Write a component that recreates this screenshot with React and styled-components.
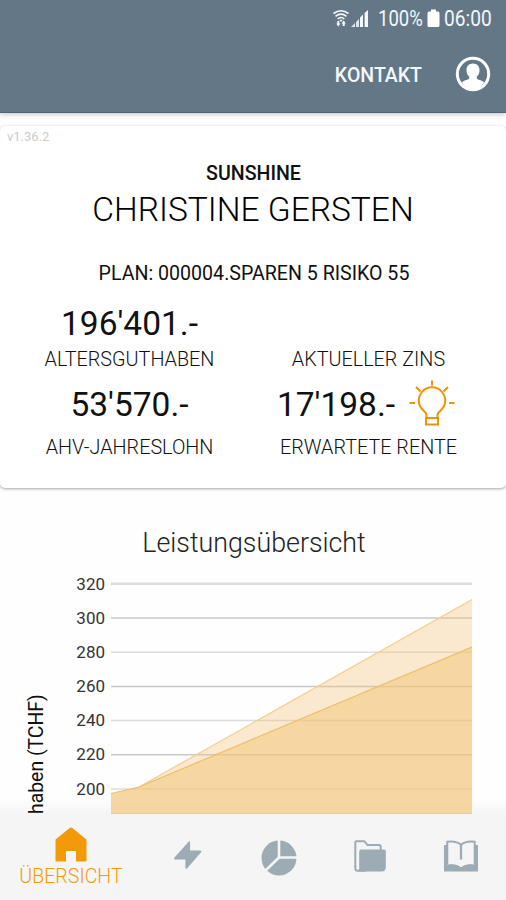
import React from "react";
import styled, { createGlobalStyle } from "styled-components";

const GlobalStyle = createGlobalStyle`
  * {
    box-sizing: border-box;
  }

  body {
    margin: 0;
    background: #fefefe;
    font-family: Roboto, "Liberation Sans", sans-serif;
    color: #111;
  }
`;

const Screen = styled.div`
  display: flex;
  flex-direction: column;
  width: 506px;
  height: 900px;
  overflow: hidden;
`;

const Header = styled.header`
  flex: none;
  height: 113px;
  background: #647786;
  border-bottom: 1px solid #50657a;
  box-shadow: 0 1px 5px rgba(60, 50, 50, 0.3);
  color: #f3f8fc;
`;

const StatusBar = styled.div`
  display: flex;
  align-items: center;
  height: 37px;
  padding-left: 332px;

  svg {
    flex: none;
  }
`;

const StatusText = styled.span`
  flex: none;
  width: ${props => props.$width}px;
  margin-left: ${props => props.$gap}px;
  font-size: 21.5px;
  line-height: 37px;
  white-space: nowrap;
  transform: scaleX(${props => props.$squeeze});
  transform-origin: left;
`;

const Toolbar = styled.div`
  display: flex;
  align-items: center;
  justify-content: flex-end;
  height: 74px;
  padding-right: 15px;
`;

const ContactLink = styled.span`
  margin: 2px 33px 0 0;
  font-size: 19.5px;
  font-weight: 500;
`;

const Card = styled.section`
  position: relative;
  flex: none;
  display: flex;
  flex-direction: column;
  align-items: center;
  height: 362px;
  margin-top: 13px;
  background: #fff;
  border-radius: 5px;
  box-shadow: 0 1px 3px rgba(0, 0, 0, 0.35);
`;

const Version = styled.div`
  align-self: flex-start;
  height: 35px;
  padding: 3px 0 0 7px;
  font-size: 13px;
  line-height: 16px;
  color: #ccc;
`;

const Company = styled.div`
  padding-left: 1px;
  font-size: 19.6px;
  font-weight: 500;
  line-height: 26px;
`;

const Name = styled.h1`
  margin: 3px 0 0;
  font-size: 33.5px;
  font-weight: 300;
  line-height: 40px;
  color: #000;
`;

const Plan = styled.div`
  margin-top: 32px;
  padding-left: 2px;
  font-size: 19.6px;
  line-height: 24px;
`;

const Figures = styled.div`
  display: grid;
  grid-template-columns: 239px 239px;
  grid-template-rows: 81px 88px;
  margin: 17px 8px 0 0;
`;

const Figure = styled.div`
  display: flex;
  flex-direction: column;
  align-items: center;
`;

const Amount = styled.div`
  display: flex;
  align-items: center;
  justify-content: center;
  height: 40px;
  padding-right: ${props => (props.$hint ? 6 : 0)}px;
  font-size: 33.5px;

  svg {
    flex: none;
    margin: -2px -1px 0 14px;
  }
`;

const Label = styled.div`
  margin-top: ${props => props.$gap}px;
  font-size: 19.8px;
  line-height: 24px;
  font-weight: 300;
`;

const Overview = styled.section`
  flex: none;
  height: 326px;
  padding-top: 39px;
  background: linear-gradient(#fefefe 95%, #f5f5f5);
`;

const Title = styled.h2`
  margin: 0;
  padding-left: 2px;
  text-align: center;
  font-size: 26.8px;
  font-weight: 300;
  line-height: 32px;
  color: #222;
`;

const Chart = styled.div`
  display: flex;
  height: 255px;
  padding-left: 25px;
`;

const AxisTitle = styled.div`
  width: 24px;
  font-size: 19.4px;
  line-height: 24px;
  white-space: nowrap;
  writing-mode: vertical-rl;
  transform: rotate(180deg);
`;

const Ticks = styled.div`
  width: 56px;
  margin-right: 6px;
  padding-top: 7.5px;
  text-align: right;
`;

const Tick = styled.div`
  height: 34.2px;
  font-size: 17px;
  line-height: 34.2px;
  color: #333;
`;

const Nav = styled.nav`
  flex: 1;
  display: grid;
  grid-template-columns: 142px 91px 91px 91px 91px;
  background: #f5f5f5;
`;

const Tab = styled.div`
  display: flex;
  flex-direction: column;
  align-items: center;
  padding-top: ${props => (props.$active ? 13 : 26)}px;
  font-size: 19.6px;
  font-weight: 300;
  line-height: 30px;
  color: ${props => (props.$active ? "#f39a0b" : "#9dabb4")};
`;

const ticks = [320, 300, 280, 260, 240, 220, 200];

const WifiIcon = () => (
  <svg width="18" height="20" viewBox="0 0 18 20" fill="none" stroke="#f3f8fc" strokeWidth="1.6">
    <path d="M1.5 4.5Q9 -1 16.5 4.5M3.5 7.3Q9 3 14.5 7.3M5.7 10Q9 7 12.3 10" />
    <path d="M7.3 10.7h3.4L9 13z" fill="#f3f8fc" stroke="none" />
    <path d="M4.2 14.5h4.2l-2.1 3zM9.6 14.5h4.2l-2.1-3z" fill="#f3f8fc" stroke="none" />
    <path d="M6.3 12v4M11.7 13v4" strokeWidth="2" />
  </svg>
);

const SignalIcon = () => (
  <svg width="19" height="20" viewBox="0 0 19 20" fill="#f3f8fc">
    <path d="M1 18l4-4v4zM6 13l3-3v8H6z" opacity=".85" />
    <path d="M10 8.5l3-3V18h-3zM14.6 4L18 1v17h-3.4z" />
  </svg>
);

const BatteryIcon = () => (
  <svg width="13" height="19" viewBox="0 0 13 19" fill="#fff">
    <path d="M4 .5h5v2h2q1.5 0 1.5 1.5v12.5q0 1.5-1.5 1.5H2q-1.5 0-1.5-1.5V4q0-1.5 1.5-1.5h2z" />
  </svg>
);

const UserIcon = () => (
  <svg width="36" height="36" viewBox="0 0 36 36">
    <circle cx="18" cy="18" r="15.7" fill="none" stroke="#fff" strokeWidth="3" />
    <path
      fill="#fff"
      d="M18 7.6c4.2 0 6.5 2.8 6.5 6.7 0 2.800-1 5-2.700 6.300v2c0 1 4.500 1.500 7.300 3.700C26.500 30.500 22.500 33 18 33S9.500 30.500 6.900 26.300c2.800-2.200 7.300-2.700 7.300-3.700v-2c-1.700-1.300-2.700-3.500-2.700-6.300 0-3.900 2.300-6.700 6.500-6.700z"
    />
  </svg>
);

const BulbIcon = () => (
  <svg width="46" height="46" viewBox="0 0 46 46" fill="none" stroke="#f39208" strokeWidth="2">
    <path d="M17.500 38v-3c0-1.500-1-2.700-2.500-4A13.200 13.200 0 1 1 31 31c-1.500 1.300-2.500 2.500-2.500 4v3" />
    <path d="M17 38h12v6.500H17z" />
    <path d="M23 .5v5M7 7l4.500 4.500M39 7l-4.500 4.500M.5 23H6M40 23h5.500" />
  </svg>
);

const HomeIcon = () => (
  <svg width="32" height="35" viewBox="0 0 32 35" fill="#f39a0b">
    <path d="M15 .8q1-.8 2 0l14.500 11.700V33.500q0 1-1 1H21v-9.500q0-1-1-1h-8q-1 0-1 1v9.500H1.500q-1 0-1-1v-21z" />
  </svg>
);

const BoltIcon = () => (
  <svg width="30" height="30" viewBox="0 0 30 30" fill="#9dabb4">
    <path d="M15.800 1.500q1.300-1 1.300.8V10.500h10.200q2 .2.600 2L14 28.500q-1.600 1-1.600-.8V19.500H2q-1.800-.2-.5-1.900z" />
  </svg>
);

const PieIcon = () => (
  <svg width="36" height="36" viewBox="0 0 36 36">
    <circle cx="18" cy="18" r="17.5" fill="#9dabb4" />
    <path d="M18 0v17.5h18M18 17.5L4.5 30.5" fill="none" stroke="#f5f5f5" strokeWidth="2.6" />
  </svg>
);

const FolderIcon = () => (
  <svg width="32" height="32" viewBox="0 0 32 32">
    <path d="M1.3 27V2.3q0-1 1-1h7.5q.8 0 1.3.7L13.5 5H25q1.7 0 1.7 1.7V11" fill="none" stroke="#9dabb4" strokeWidth="2" />
    <path d="M1.3 26v2.2q0 2.500 2.500 2.500H12" fill="none" stroke="#9dabb4" strokeWidth="2" />
    <path d="M7 9.500h23q1.800 0 1.800 2V27q0 4.500-4.500 4.500H4q1.200-1 1.200-3V11.500q0-2 1.800-2z" fill="#9dabb4" />
  </svg>
);

const BookIcon = () => (
  <svg width="36" height="32" viewBox="0 0 36 32">
    <path d="M1 5h4v19h26V5h4v26.500H1z" fill="#9dabb4" />
    <path d="M4.800 25V2Q13 .5 18 4.800 23 .5 31.200 2v23Q23 23.500 18 27.500 13 23.500 4.800 25z" fill="#f5f5f5" />
    <path d="M5 24.5Q13 23.500 18 27.500 23 23.500 31 24.500V30H5z" fill="#9dabb4" />
    <path d="M4.300 24V1.800Q13 .5 18 4.800 23 .5 31.700 1.800V24" fill="none" stroke="#9dabb4" strokeWidth="2" />
    <path d="M18 5v14.500" stroke="#9dabb4" strokeWidth="2.300" />
  </svg>
);

const AreaChart = () => (
  <svg width="361" height="255" viewBox="0 0 361 255">
    {ticks.map((tick, i) => (
      <path key={tick} d={`M0 ${24.8 + i * 34.2}H361`} stroke={i % 2 ? "#c8c8c8" : "#dcdcdc"} strokeWidth={i ? 1.5 : 2.5} />
    ))}
    <path d="M0 234.5L28 228 361 40.5V255H0z" fill="rgba(244, 193, 120, 0.35)" />
    <path d="M0 234.5L28 228 361 88V255H0z" fill="rgba(243, 201, 123, 0.55)" />
    <path d="M28 228L361 40.5" fill="none" stroke="#f4cf91" strokeWidth="1.2" />
    <path d="M0 234.5L28 228 361 88" fill="none" stroke="#efbd6b" strokeWidth="1.2" />
    <path d="M0 254.5H361" stroke="#e3cda7" />
  </svg>
);

const App = () => (
  <Screen>
    <GlobalStyle />
    <Header>
      <StatusBar>
        <WifiIcon />
        <SignalIcon />
        <StatusText $width={49} $gap={9} $squeeze={0.86}>100%</StatusText>
        <BatteryIcon />
        <StatusText $width={48} $gap={4} $squeeze={0.89}>06:00</StatusText>
      </StatusBar>
      <Toolbar>
        <ContactLink>KONTAKT</ContactLink>
        <UserIcon />
      </Toolbar>
    </Header>

    <Card>
      <Version>v1.36.2</Version>
      <Company>SUNSHINE</Company>
      <Name>CHRISTINE GERSTEN</Name>
      <Plan>PLAN: 000004.SPAREN 5 RISIKO 55</Plan>
      <Figures>
        <Figure>
          <Amount>196'401.-</Amount>
          <Label $gap={5}>ALTERSGUTHABEN</Label>
        </Figure>
        <Figure>
          <Amount />
          <Label $gap={5}>AKTUELLER ZINS</Label>
        </Figure>
        <Figure>
          <Amount>53'570.-</Amount>
          <Label $gap={12}>AHV-JAHRESLOHN</Label>
        </Figure>
        <Figure>
          <Amount $hint>
            17'198.-
            <BulbIcon />
          </Amount>
          <Label $gap={12}>ERWARTETE RENTE</Label>
        </Figure>
      </Figures>
    </Card>

    <Overview>
      <Title>Leistungsübersicht</Title>
      <Chart>
        <AxisTitle>haben (TCHF)</AxisTitle>
        <Ticks>
          {ticks.map(tick => (
            <Tick key={tick}>{tick}</Tick>
          ))}
        </Ticks>
        <AreaChart />
      </Chart>
    </Overview>

    <Nav>
      <Tab $active>
        <HomeIcon />
        ÜBERSICHT
      </Tab>
      <Tab>
        <BoltIcon />
      </Tab>
      <Tab>
        <PieIcon />
      </Tab>
      <Tab>
        <FolderIcon />
      </Tab>
      <Tab>
        <BookIcon />
      </Tab>
    </Nav>
  </Screen>
);

export default App;
